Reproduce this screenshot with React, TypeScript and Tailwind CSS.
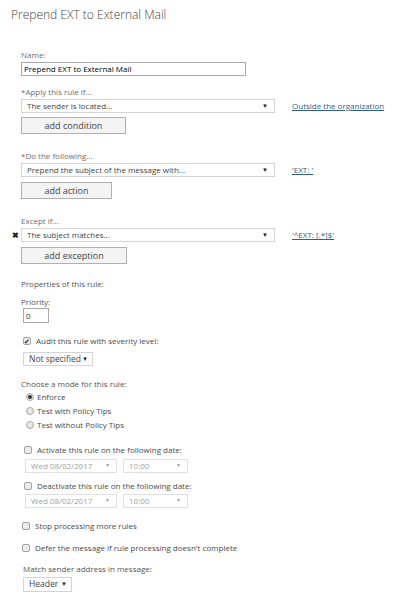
import React from 'react'

const font = "font-['Open_Sans',sans-serif]"

function Label({ text, className = '' }: { text: string; className?: string }) {
  return <div className={`h-[12px] text-[8px] leading-[12px] text-[#6e6e6e] ${className}`}>{text}</div>
}

function Select({ text, className = '', disabled = false }: { text: string; className?: string; disabled?: boolean }) {
  return (
    <div
      className={`flex h-[14px] items-center justify-between border bg-white pl-[5px] ${
        disabled ? 'border-[#e1e1e1] text-[#a0a0a0]' : 'border-[#d4d4d4] text-[#444]'
      } ${className}`}
    >
      <span className="whitespace-nowrap">{text}</span>
      {disabled ? (
        <span className="text-[5px] text-[#999]">▼</span>
      ) : (
        <span className="text-[6px] text-[#222]">▼</span>
      )}
    </div>
  )
}

function Button({ text, className = '' }: { text: string; className?: string }) {
  return (
    <div
      className={`flex h-[17px] items-center justify-center border border-[#b0b0b0] bg-[#f4f4f4] text-[9px] text-[#444] ${className}`}
    >
      {text}
    </div>
  )
}

function Checkbox({ checked = false }: { checked?: boolean }) {
  return (
    <span className="flex h-[8px] w-[8px] items-center justify-center rounded-[2px] border border-[#a3a3a3] bg-[#ebebeb]">
      {checked && <span className="text-[7px] leading-none text-[#222]">✔</span>}
    </span>
  )
}

function Radio({ checked = false }: { checked?: boolean }) {
  return (
    <span className="flex h-[8px] w-[8px] items-center justify-center rounded-full border border-[#a8a8a8] bg-[#e8e8e8]">
      {checked && <span className="h-[4px] w-[4px] rounded-full bg-[#333]" />}
    </span>
  )
}

function CheckRow({ text, checked = false, className = '' }: { text: string; checked?: boolean; className?: string }) {
  return (
    <div className={`flex h-[12px] items-center gap-[5px] text-[8px] text-[#4a4a4a] ${className}`}>
      <Checkbox checked={checked} />
      <span>{text}</span>
    </div>
  )
}

function RadioRow({ text, checked = false }: { text: string; checked?: boolean }) {
  return (
    <div className="ml-[5px] flex h-[14px] items-center gap-[3px] text-[8px] text-[#4a4a4a]">
      <Radio checked={checked} />
      <span>{text}</span>
    </div>
  )
}

function Link({ text }: { text: string }) {
  return <span className="ml-[17px] text-[8px] text-[#2f6089] underline">{text}</span>
}

export default function App() {
  return (
    <div className={`h-[598px] w-[412px] overflow-hidden bg-white ${font}`}>
      <div className="h-[30px] pl-[11px] text-[12px] leading-[30px] font-light text-[#444]">
        Prepend EXT to External Mail
      </div>

      <div className="flex flex-col pl-[21px]">
        <Label text="Name:" className="mt-[19px]" />
        <div className="mt-[1px] flex h-[14px] w-[225px] items-center border border-[#a9a9a9] pl-[2px] text-[8px] text-black">
          Prepend EXT to External Mail
        </div>

        <Label text="*Apply this rule if..." className="mt-[10px]" />
        <div className="mt-[1px] flex items-center">
          <Select text="The sender is located..." className="w-[254px] pr-[6px] text-[8px]" />
          <Link text="Outside the organization" />
        </div>
        <Button text="add condition" className="mt-[4px] w-[105px]" />

        <Label text="*Do the following..." className="mt-[16px]" />
        <div className="mt-[1px] flex items-center">
          <Select text="Prepend the subject of the message with..." className="w-[254px] pr-[6px] text-[8px]" />
          <Link text="'EXT: '" />
        </div>
        <Button text="add action" className="mt-[5px] w-[91px]" />

        <Label text="Except if..." className="mt-[16px]" />
        <div className="relative mt-[1px] flex items-center">
          <span className="absolute left-[-9px] text-[8px] font-bold text-[#222]">✖</span>
          <Select text="The subject matches..." className="w-[254px] pr-[6px] text-[8px]" />
          <Link text="'^EXT: [.*]$'" />
        </div>
        <Button text="add exception" className="mt-[5px] w-[106px]" />

        <Label text="Properties of this rule:" className="mt-[14px] text-[#555]" />
        <Label text="Priority:" className="mt-[6px] text-[#555]" />
        <div className="ml-[2px] flex h-[15px] w-[26px] items-center border border-[#a9a9a9] pl-[2px] text-[8px] text-[#333]">
          0
        </div>

        <CheckRow text="Audit this rule with severity level:" checked className="mt-[12px] ml-[2px]" />
        <Select text="Not specified" className="mt-[5px] ml-[2px] w-[70px] pr-[4px] text-[8.5px]" />

        <Label text="Choose a mode for this rule:" className="mt-[12px] text-[#555]" />
        <RadioRow text="Enforce" checked />
        <RadioRow text="Test with Policy Tips" />
        <RadioRow text="Test without Policy Tips" />

        <CheckRow text="Activate this rule on the following date:" className="mt-[12px] ml-[3px]" />
        <div className="mt-[3px] ml-[4px] flex gap-[6px]">
          <Select text="Wed 08/02/2017" disabled className="w-[92px] pr-[6px] text-[8px]" />
          <Select text="10:00" disabled className="w-[65px] border-[#c9c9c9] pr-[6px] text-[8px]" />
        </div>
        <CheckRow text="Deactivate this rule on the following date:" className="mt-[7px] ml-[3px]" />
        <div className="mt-[2px] ml-[4px] flex gap-[6px]">
          <Select text="Wed 08/02/2017" disabled className="w-[92px] pr-[6px] text-[8px]" />
          <Select text="10:00" disabled className="w-[65px] border-[#c9c9c9] pr-[6px] text-[8px]" />
        </div>

        <CheckRow text="Stop processing more rules" className="mt-[12px] ml-[1px]" />
        <CheckRow text="Defer the message if rule processing doesn't complete" className="mt-[10px] ml-[1px]" />

        <Label text="Match sender address in message:" className="mt-[9px] ml-[2px] text-[#555]" />
        <Select text="Header" className="mt-[2px] ml-[2px] h-[15px] w-[49px] pr-[4px] text-[8.5px]" />
      </div>
    </div>
  )
}
